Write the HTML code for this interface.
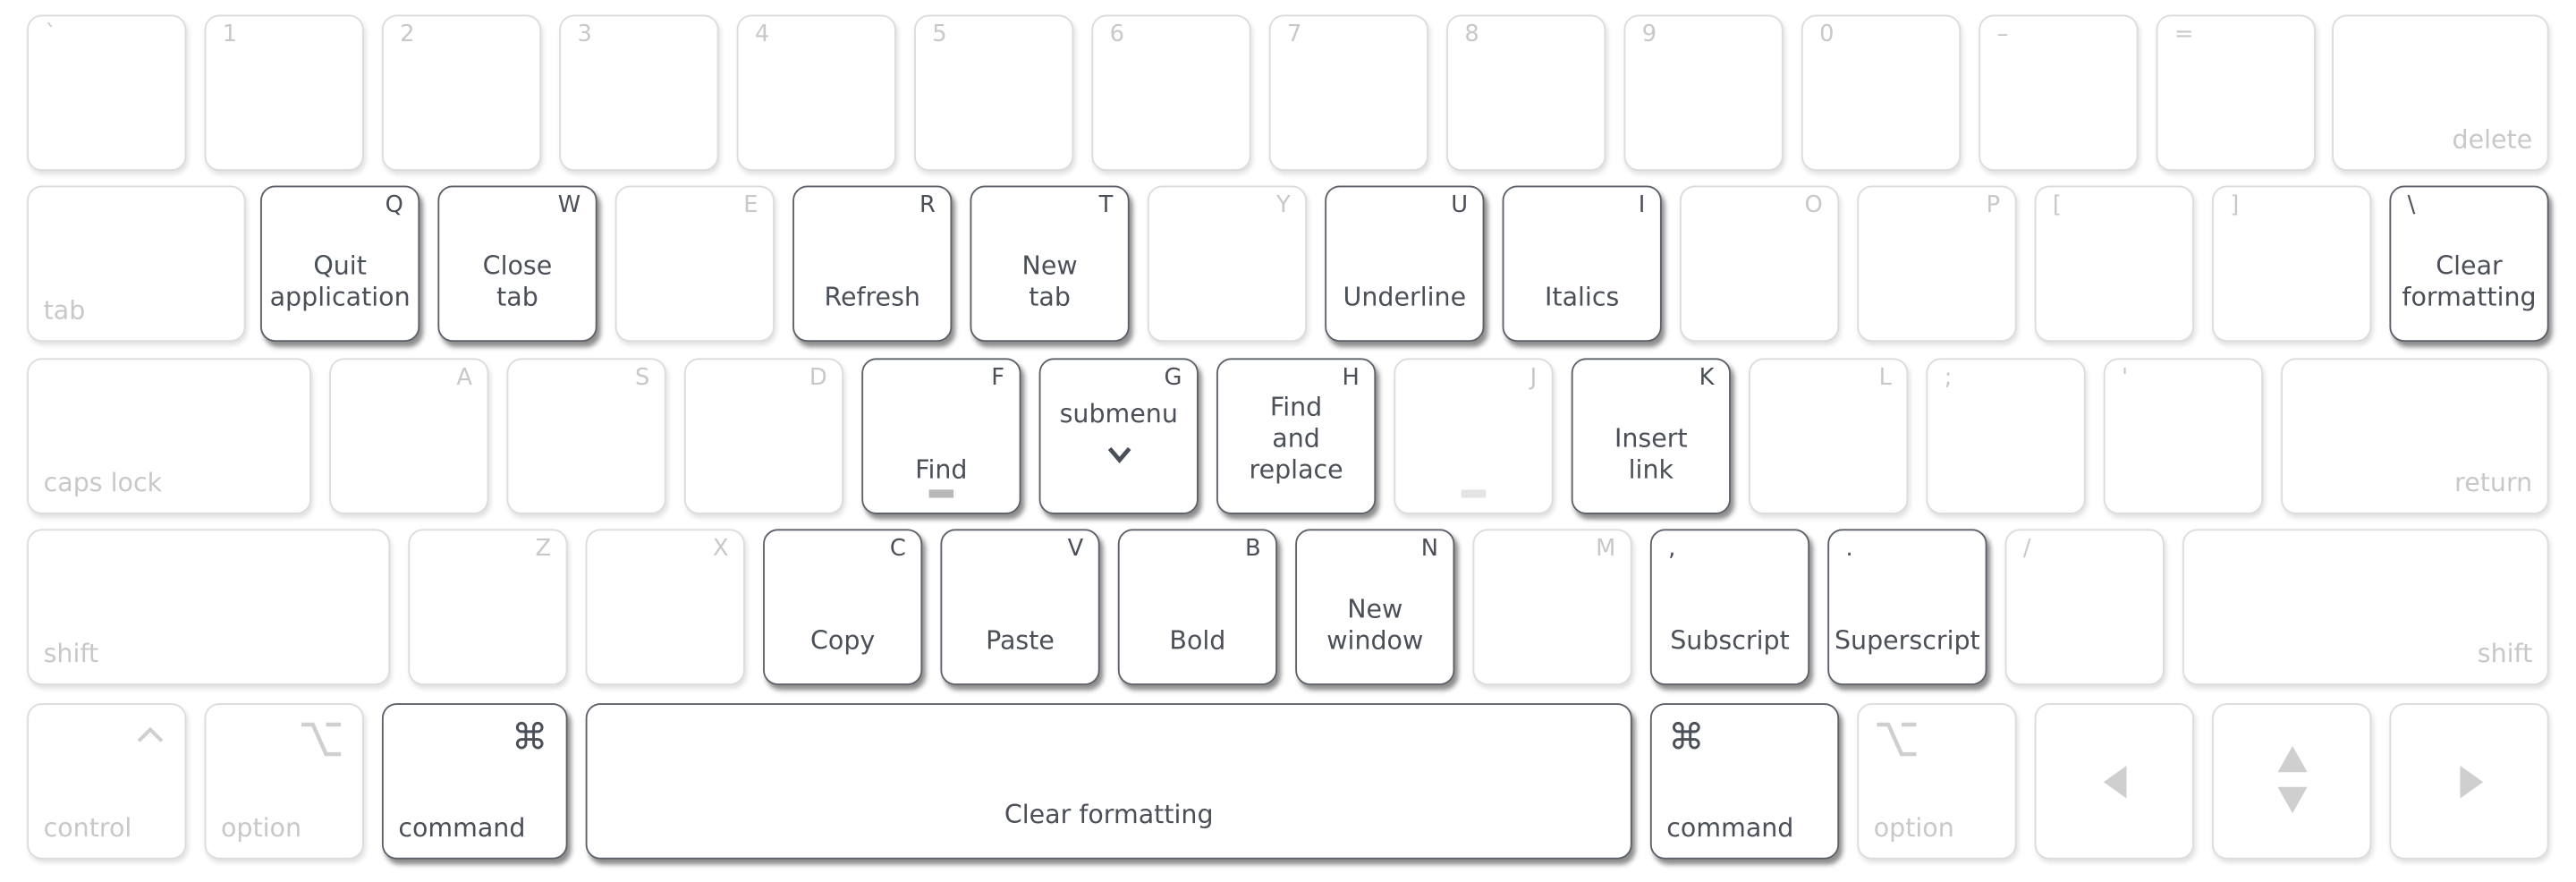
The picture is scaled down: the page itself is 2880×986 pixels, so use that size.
<!DOCTYPE html>
<html><head><meta charset="utf-8"><style>
html,body{margin:0;padding:0;background:#fff;width:2880px;height:985px;overflow:hidden}
#w{position:absolute;left:-1px;top:0;width:1568px;height:537px;transform:scale(1.83673);transform-origin:0 0;font-family:"DejaVu Sans","Liberation Sans",sans-serif}
.k{position:absolute;box-sizing:border-box;height:95px;border:1.6px solid #dcdcdc;border-radius:9px;background:#fff;box-shadow:1px 2px 3px rgba(0,0,0,.12);color:#c8c8c8}
.a{border-color:#5c6068;box-shadow:2px 3px 3px rgba(0,0,0,.45);color:#4b4f57}
.tr,.tl{position:absolute;top:2px;font-size:14px;line-height:19px}
.tr{right:9px}.tl{left:10px}
.b{position:absolute;left:0;right:0;bottom:16px;text-align:center;font-size:15.5px;line-height:19px}
.m{position:absolute;left:9px;bottom:8px;font-size:15.5px;line-height:19px}
.mr{position:absolute;right:9px;bottom:8px;font-size:15.5px;line-height:19px}
.r1{top:9px}.r2{top:113px}.r3{top:218px}.r4{top:322px}.r5{top:428px}
</style></head><body><div id="w">
<!-- row1 -->
<div class="k r1" style="left:17px;width:97px"><span class="tl">`</span></div>
<div class="k r1" style="left:125px;width:97px"><span class="tl">1</span></div>
<div class="k r1" style="left:233px;width:97px"><span class="tl">2</span></div>
<div class="k r1" style="left:341px;width:97px"><span class="tl">3</span></div>
<div class="k r1" style="left:449px;width:97px"><span class="tl">4</span></div>
<div class="k r1" style="left:557px;width:97px"><span class="tl">5</span></div>
<div class="k r1" style="left:665px;width:97px"><span class="tl">6</span></div>
<div class="k r1" style="left:773px;width:97px"><span class="tl">7</span></div>
<div class="k r1" style="left:881px;width:97px"><span class="tl">8</span></div>
<div class="k r1" style="left:989px;width:97px"><span class="tl">9</span></div>
<div class="k r1" style="left:1097px;width:97px"><span class="tl">0</span></div>
<div class="k r1" style="left:1205px;width:97px"><span class="tl">–</span></div>
<div class="k r1" style="left:1313px;width:97px"><span class="tl">=</span></div>
<div class="k r1" style="left:1420px;width:132px"><span class="mr">delete</span></div>
<!-- row2 -->
<div class="k r2" style="left:17px;width:133px"><span class="m">tab</span></div>
<div class="k a r2" style="left:159px;width:97px"><span class="tr">Q</span><span class="b">Quit<br>application</span></div>
<div class="k a r2" style="left:267px;width:97px"><span class="tr">W</span><span class="b">Close<br>tab</span></div>
<div class="k r2" style="left:375px;width:97px"><span class="tr">E</span></div>
<div class="k a r2" style="left:483px;width:97px"><span class="tr">R</span><span class="b">Refresh</span></div>
<div class="k a r2" style="left:591px;width:97px"><span class="tr">T</span><span class="b">New<br>tab</span></div>
<div class="k r2" style="left:699px;width:97px"><span class="tr">Y</span></div>
<div class="k a r2" style="left:807px;width:97px"><span class="tr">U</span><span class="b">Underline</span></div>
<div class="k a r2" style="left:915px;width:97px"><span class="tr">I</span><span class="b">Italics</span></div>
<div class="k r2" style="left:1023px;width:97px"><span class="tr">O</span></div>
<div class="k r2" style="left:1131px;width:97px"><span class="tr">P</span></div>
<div class="k r2" style="left:1239px;width:97px"><span class="tl">[</span></div>
<div class="k r2" style="left:1347px;width:97px"><span class="tl">]</span></div>
<div class="k a r2" style="left:1455px;width:97px"><span class="tl">\</span><span class="b">Clear<br>formatting</span></div>
<!-- row3 -->
<div class="k r3" style="left:17px;width:173px"><span class="m">caps lock</span></div>
<div class="k r3" style="left:201px;width:97px"><span class="tr">A</span></div>
<div class="k r3" style="left:309px;width:97px"><span class="tr">S</span></div>
<div class="k r3" style="left:417px;width:97px"><span class="tr">D</span></div>
<div class="k a r3" style="left:525px;width:97px"><span class="tr">F</span><span class="b">Find</span><div style="position:absolute;left:40px;top:79px;width:15px;height:5px;background:#b8b8b8"></div></div>
<div class="k a r3" style="left:633px;width:97px"><span class="tr">G</span><span class="b" style="bottom:50px">submenu</span><svg style="position:absolute;left:40px;top:52px" width="16" height="12" viewBox="0 0 16 12"><path d="M2 2 L8 9 L14 2" fill="none" stroke="#4b4f57" stroke-width="2.6"/></svg></div>
<div class="k a r3" style="left:741px;width:97px"><span class="tr">H</span><span class="b">Find<br>and<br>replace</span></div>
<div class="k r3" style="left:849px;width:97px"><span class="tr">J</span><div style="position:absolute;left:40px;top:79px;width:15px;height:5px;background:#e4e4e4"></div></div>
<div class="k a r3" style="left:957px;width:97px"><span class="tr">K</span><span class="b">Insert<br>link</span></div>
<div class="k r3" style="left:1065px;width:97px"><span class="tr">L</span></div>
<div class="k r3" style="left:1173px;width:97px"><span class="tl">;</span></div>
<div class="k r3" style="left:1281px;width:97px"><span class="tl">'</span></div>
<div class="k r3" style="left:1389px;width:163px"><span class="mr">return</span></div>
<!-- row4 -->
<div class="k r4" style="left:17px;width:221px"><span class="m">shift</span></div>
<div class="k r4" style="left:249px;width:97px"><span class="tr">Z</span></div>
<div class="k r4" style="left:357px;width:97px"><span class="tr">X</span></div>
<div class="k a r4" style="left:465px;width:97px"><span class="tr">C</span><span class="b">Copy</span></div>
<div class="k a r4" style="left:573px;width:97px"><span class="tr">V</span><span class="b">Paste</span></div>
<div class="k a r4" style="left:681px;width:97px"><span class="tr">B</span><span class="b">Bold</span></div>
<div class="k a r4" style="left:789px;width:97px"><span class="tr">N</span><span class="b">New<br>window</span></div>
<div class="k r4" style="left:897px;width:97px"><span class="tr">M</span></div>
<div class="k a r4" style="left:1005px;width:97px"><span class="tl">,</span><span class="b">Subscript</span></div>
<div class="k a r4" style="left:1113px;width:97px"><span class="tl">.</span><span class="b">Superscript</span></div>
<div class="k r4" style="left:1221px;width:97px"><span class="tl">/</span></div>
<div class="k r4" style="left:1329px;width:223px"><span class="mr">shift</span></div>
<!-- row5 -->
<div class="k r5" style="left:17px;width:97px"><svg style="position:absolute;right:12px;top:12px" width="18" height="12" viewBox="0 0 18 12"><path d="M2 10 L9 3 L16 10" fill="none" stroke="#cfcfcf" stroke-width="2.2"/></svg><span class="m">control</span></div>
<div class="k r5" style="left:125px;width:97px"><svg style="position:absolute;right:12px;top:10px" width="26" height="22" viewBox="0 0 26 22"><path d="M1 2 H8 L16 20 H25 M16 2 H25" fill="none" stroke="#cfcfcf" stroke-width="2.4"/></svg><span class="m">option</span></div>
<div class="k a r5" style="left:233px;width:113px"><span style="position:absolute;right:11px;top:8px;font-size:22px">⌘</span><span class="m">command</span></div>
<div class="k a r5" style="left:357px;width:637px"><span class="b">Clear formatting</span></div>
<div class="k a r5" style="left:1005px;width:115px"><span style="position:absolute;left:10px;top:8px;font-size:22px">⌘</span><span class="m">command</span></div>
<div class="k r5" style="left:1131px;width:97px"><svg style="position:absolute;left:10px;top:10px" width="26" height="22" viewBox="0 0 26 22"><path d="M1 2 H8 L16 20 H25 M16 2 H25" fill="none" stroke="#cfcfcf" stroke-width="2.4"/></svg><span class="m">option</span></div>
<div class="k r5" style="left:1239px;width:97px"><svg style="position:absolute;left:39px;top:36px" width="18" height="22" viewBox="0 0 18 22"><path d="M16 1 L2 11 L16 21 Z" fill="#cfcfcf"/></svg></div>
<div class="k r5" style="left:1347px;width:97px"><svg style="position:absolute;left:38px;top:24px" width="20" height="44" viewBox="0 0 20 44"><path d="M10 1 L19 17 H1 Z M1 26 H19 L10 42 Z" fill="#cfcfcf"/></svg></div>
<div class="k r5" style="left:1455px;width:97px"><svg style="position:absolute;left:40px;top:36px" width="18" height="22" viewBox="0 0 18 22"><path d="M2 1 L16 11 L2 21 Z" fill="#cfcfcf"/></svg></div>
</div></body></html>
